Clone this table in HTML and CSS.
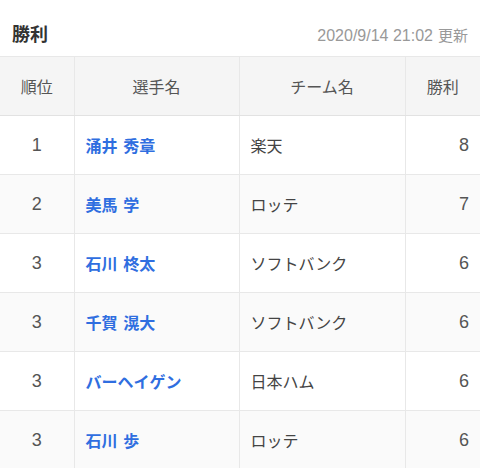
FILE: index.html
```html
<!DOCTYPE html>
<html lang="ja">
<head>
<meta charset="utf-8">
<link rel="stylesheet" href="styles.css">
</head>
<body>
<div class="head">
  <h1 class="title">勝利</h1>
  <span class="updated">2020/9/14 21:02<span class="upd-label">更新</span></span>
</div>
<table class="rank">
  <thead>
    <tr><th class="c-rank">順位</th><th class="c-name">選手名</th><th class="c-team">チーム名</th><th class="c-val">勝利</th></tr>
  </thead>
  <tbody>
    <tr><td class="c-rank num">1</td><td class="c-name"><a>涌井 秀章</a></td><td class="c-team">楽天</td><td class="c-val num">8</td></tr>
    <tr><td class="c-rank num">2</td><td class="c-name"><a>美馬 学</a></td><td class="c-team">ロッテ</td><td class="c-val num">7</td></tr>
    <tr><td class="c-rank num">3</td><td class="c-name"><a>石川 柊太</a></td><td class="c-team">ソフトバンク</td><td class="c-val num">6</td></tr>
    <tr><td class="c-rank num">3</td><td class="c-name"><a>千賀 滉大</a></td><td class="c-team">ソフトバンク</td><td class="c-val num">6</td></tr>
    <tr><td class="c-rank num">3</td><td class="c-name"><a>バーヘイゲン</a></td><td class="c-team">日本ハム</td><td class="c-val num">6</td></tr>
    <tr><td class="c-rank num">3</td><td class="c-name"><a>石川 歩</a></td><td class="c-team">ロッテ</td><td class="c-val num">6</td></tr>
  </tbody>
</table>
</body>
</html>
```
FILE: styles.css
```css
html, body {
  margin: 0;
  padding: 0;
  background: #fff;
  font-family: "Noto Sans CJK JP", "Noto Sans", sans-serif;
  color: #333;
}
.head {
  display: flex;
  justify-content: space-between;
  align-items: baseline;
  height: 56px;
  box-sizing: border-box;
  padding: 20px 12px 0 12px;
}
.title {
  margin: 0;
  font-size: 18px;
  font-weight: 700;
  color: #333;
  line-height: 26px;
}
.updated {
  font-family: "Liberation Sans", "Noto Sans CJK JP", sans-serif;
  font-size: 16px;
  color: #999;
}
.upd-label {
  font-family: "Noto Sans CJK JP", sans-serif;
  font-size: 15px;
  margin-left: 5px;
}
.rank {
  width: 480px;
  border-collapse: collapse;
  table-layout: fixed;
  font-size: 16px;
}
.rank th, .rank td {
  border: 1px solid #e8e8e8;
  height: 59px;
  padding: 0 11px;
  box-sizing: border-box;
  font-weight: 400;
}
.rank tr > :first-child { border-left: none; }
.rank tr > :last-child { border-right: none; }
.rank thead th {
  background: #f5f5f5;
  color: #555;
  text-align: center;
  border-bottom: 1px solid #e2e2e2;
}
.rank tbody tr:nth-child(even) td { background: #fafafa; }
.c-rank { width: 74px; text-align: center; }
.c-name { width: 165px; }
.c-team { width: 166px; }
.c-val { width: 75px; text-align: right; }
.rank td.num {
  font-family: "Liberation Sans", sans-serif;
  font-size: 18px;
  color: #555;
}
.rank td.c-rank { text-align: center; }
.rank td.c-val { text-align: right; }
.rank td.c-team { color: #444; }
.rank td.c-name a {
  color: #2f6ee0;
  font-weight: 700;
  text-decoration: none;
  word-spacing: 2px;
}
```
